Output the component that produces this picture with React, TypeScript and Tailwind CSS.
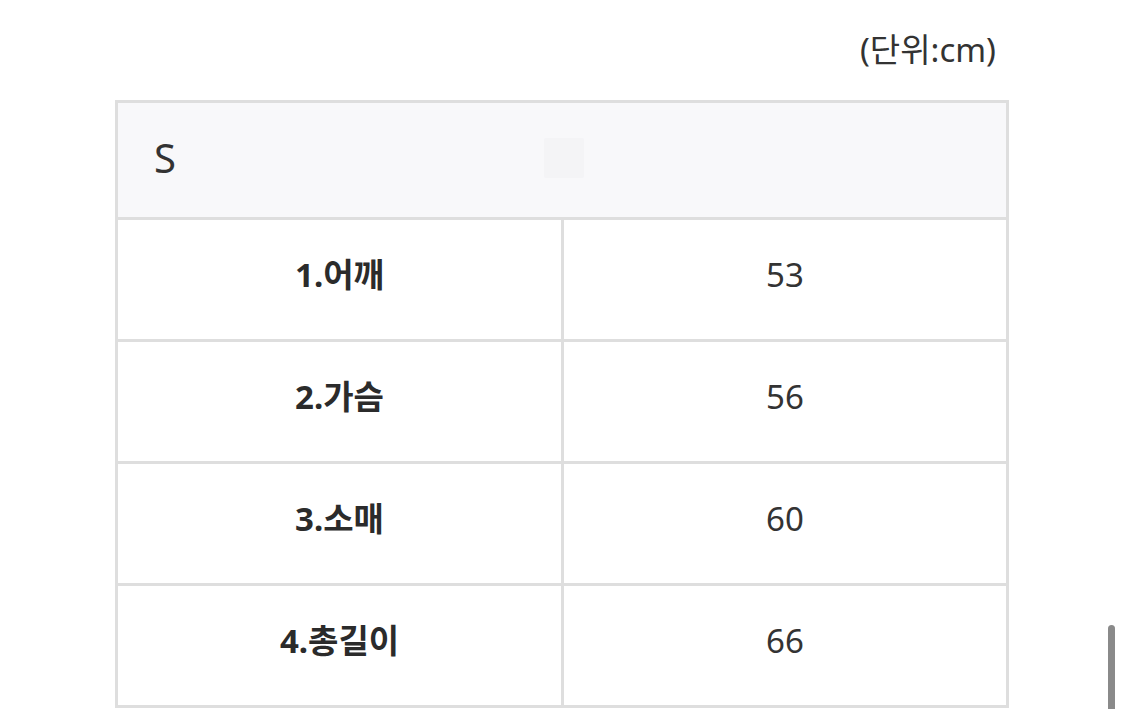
import React from "react";

const rows = [
  { label: "1.어깨", value: "53" },
  { label: "2.가슴", value: "56" },
  { label: "3.소매", value: "60" },
  { label: "4.총길이", value: "66" },
];

export default function App() {
  return (
    <div
      className="relative w-[1125px] h-[709px] overflow-hidden bg-white text-[#2b2b2b]"
      style={{ fontFamily: '"Noto Sans", "Noto Sans CJK KR", sans-serif' }}
    >
      <div className="ml-[115px] w-[894px]">
        <div className="flex justify-end pr-[13px] pt-[26px] h-[100px] text-[33px] leading-[48px] text-[#333]">
          (단위:cm)
        </div>

        <div className="border-[3px] border-[#dedede]">
          <div className="h-[114px] bg-[#f8f8fa] flex items-center pl-[36px] pb-[4px]">
            <span className="w-[390px] text-[40px] leading-none text-[#333]">S</span>
            <div className="w-[40px] h-[40px] bg-[#f4f4f6] rounded-[2px]" />
          </div>

          {rows.map((r) => (
            <div key={r.label} className="flex h-[122px] border-t-[3px] border-[#dedede]">
              <div className="w-[446px] flex items-center justify-center pb-[10px] border-r-[3px] border-[#dedede] text-[33px] font-bold text-[#2b2b2b]">
                {r.label}
              </div>
              <div className="flex-1 flex items-center justify-center pb-[10px] text-[33px] text-[#333]">
                {r.value}
              </div>
            </div>
          ))}
        </div>
      </div>

      <div className="absolute left-[1108px] top-[625px] w-[7px] h-[100px] rounded-full bg-[#8a8a8a]" />
    </div>
  );
}
